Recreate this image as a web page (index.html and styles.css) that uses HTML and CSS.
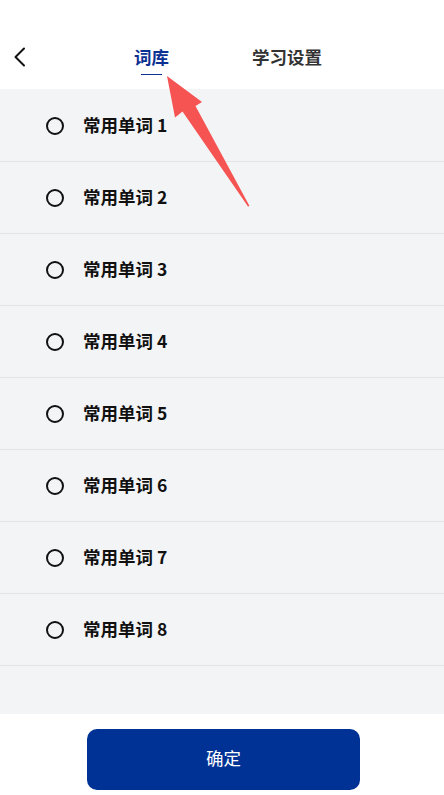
FILE: index.html
```html
<!DOCTYPE html>
<html lang="zh">
<head>
<meta charset="utf-8">
<link rel="stylesheet" href="styles.css">
</head>
<body>
<div class="page">
  <header class="nav">
    <div class="back">
      <svg width="14" height="20" viewBox="0 0 14 20"><path d="M11 1.5 L2.5 10 L11 18.5" fill="none" stroke="#111" stroke-width="2" stroke-linecap="round" stroke-linejoin="round"/></svg>
    </div>
    <div class="tabs">
      <div class="tab active">词库<span class="bar"></span></div>
      <div class="tab">学习设置</div>
    </div>
  </header>
  <main class="list">
    <div class="row"><span class="radio"></span><span class="label">常用单词 1</span></div>
    <div class="row"><span class="radio"></span><span class="label">常用单词 2</span></div>
    <div class="row"><span class="radio"></span><span class="label">常用单词 3</span></div>
    <div class="row"><span class="radio"></span><span class="label">常用单词 4</span></div>
    <div class="row"><span class="radio"></span><span class="label">常用单词 5</span></div>
    <div class="row"><span class="radio"></span><span class="label">常用单词 6</span></div>
    <div class="row"><span class="radio"></span><span class="label">常用单词 7</span></div>
    <div class="row"><span class="radio"></span><span class="label">常用单词 8</span></div>
  </main>
  <footer class="foot">
    <button class="confirm">确定</button>
  </footer>
  <svg class="arrow" width="444" height="795" viewBox="0 0 444 795">
    <polygon points="167,76 202,102 195.5,106 249.5,206 248,206.5 182.5,111.5 175,117.5" fill="#f65353"/>
  </svg>
</div>
</body>
</html>
```
FILE: styles.css
```css
* { box-sizing: border-box; }
html, body { margin: 0; padding: 0; background: #fff; }
body {
  font-family: "Noto Sans CJK SC", "Noto Sans", sans-serif;
  width: 444px;
  height: 795px;
  overflow: hidden;
}
.page { position: relative; width: 444px; height: 795px; display: flex; flex-direction: column; }
.nav {
  height: 89px;
  display: flex;
  align-items: flex-start;
  padding: 47px 0 0 13px;
}
.back { width: 14px; height: 20px; display: flex; }
.tabs {
  display: flex;
  gap: 83px;
  margin-left: 107px;
  margin-top: -1px;
}
.tab {
  position: relative;
  font-size: 17.5px;
  font-weight: 700;
  line-height: 22px;
  color: #333;
}
.tab.active { color: #0b3192; }
.bar {
  position: absolute;
  left: 7px;
  top: 28px;
  width: 21px;
  height: 1px;
  background: #0b3192;
}
.list {
  background: #f3f4f6;
  padding-bottom: 48px;
  padding-top: 0.5px;
}
.row {
  height: 72px;
  border-bottom: 1px solid #e2e3e6;
  display: flex;
  align-items: center;
  padding-left: 46px;
}
.radio {
  width: 18px;
  height: 18px;
  border: 2px solid #111;
  border-radius: 50%;
  margin-top: 1px;
}
.label {
  margin-left: 19px;
  font-size: 17.5px;
  font-weight: 700;
  color: #111;
  line-height: 22px;
}
.foot {
  flex: 1;
  display: flex;
  justify-content: center;
  padding-top: 15px;
  padding-left: 3px;
}
.confirm {
  width: 273px;
  height: 61px;
  border: none;
  border-radius: 10px;
  background: #003194;
  color: #fff;
  font-family: "Noto Sans CJK SC", "Noto Sans", sans-serif;
  font-size: 17.5px;
  font-weight: 400;
  padding: 0 0 3px;
}
.arrow { position: absolute; left: 0; top: 0; pointer-events: none; }
```
